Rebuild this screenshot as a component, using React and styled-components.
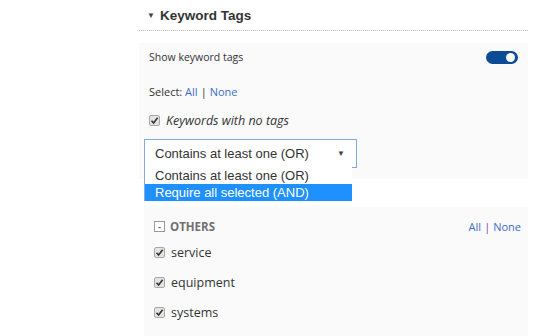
import React from "react";
import styled, { createGlobalStyle } from "styled-components";

const GlobalStyle = createGlobalStyle`
  body {
    margin: 0;
    background: #ffffff;
    font-family: "Open Sans", "Liberation Sans", sans-serif;
    color: #333333;
  }
`;

const Page = styled.div`
  width: 540px;
  height: 336px;
  overflow: hidden;
  padding-left: 139px;
  box-sizing: border-box;
`;

const Column = styled.div`
  width: 389px;
`;

const Header = styled.div`
  height: 30px;
  display: flex;
  align-items: center;
  gap: 6px;
  padding-left: 8px;
  border-bottom: 1px dotted #bdbdbd;
  font-family: "Liberation Sans", Arial, sans-serif;
  font-weight: bold;
  font-size: 13.5px;
  color: #333;
`;

const Caret = styled.span`
  font-size: 8px;
  color: #444;
  width: 7px;
`;

const Panel = styled.div`
  background: #fafafa;
  padding: ${(p) => p.$pad};
  margin-left: ${(p) => p.$indent || 0}px;
  margin-top: ${(p) => p.$top || 0}px;
`;

const Row = styled.div`
  display: flex;
  align-items: center;
  justify-content: ${(p) => (p.$spread ? "space-between" : "flex-start")};
  height: ${(p) => p.$h}px;
  margin-top: ${(p) => p.$mt || 0}px;
  font-size: ${(p) => p.$size || 11}px;
  gap: 6px;
`;

const Toggle = styled.div`
  width: 32px;
  height: 13px;
  border-radius: 7px;
  background: #0b4c94;
  position: relative;
  &::after {
    content: "";
    position: absolute;
    right: 3px;
    top: 2px;
    width: 9px;
    height: 9px;
    border-radius: 50%;
    background: #fff;
  }
`;

const Link = styled.a`
  color: #3a6fc9;
  text-decoration: none;
  cursor: pointer;
`;

const Sep = styled.span`
  color: ${(p) => p.$color || "#333"};
  margin: 0 3px;
`;

const Box = styled.span`
  width: 11px;
  height: 11px;
  box-sizing: border-box;
  border: 1px solid #a8a8a8;
  border-radius: 2px;
  background: #e4e4e4;
  display: inline-flex;
  align-items: center;
  justify-content: center;
  flex: none;
`;

const Check = () => (
  <Box>
    <svg width="9" height="9" viewBox="0 0 9 9">
      <path d="M1.5 4.8 L3.6 7 L7.6 1.8" fill="none" stroke="#333" strokeWidth="1.6" />
    </svg>
  </Box>
);

const Italic = styled.span`
  font-style: italic;
  font-size: 12.5px;
`;

const SelectWrap = styled.div`
  position: relative;
  margin-left: -5px;
  margin-top: 9px;
  width: 213px;
`;

const SelectBox = styled.div`
  height: 29px;
  box-sizing: border-box;
  border: 1px solid #86a9e2;
  background: #fff;
  display: flex;
  align-items: center;
  justify-content: space-between;
  padding: 0 11px 0 10px;
  font-family: "Liberation Sans", Arial, sans-serif;
  font-size: 13px;
  color: #333;
`;

const Arrow = styled.span`
  font-size: 8px;
  color: #444;
`;

const Options = styled.div`
  position: absolute;
  left: 0;
  top: 28px;
  width: 207px;
  background: #fff;
  border-left: 1px solid #86a9e2;
  font-family: "Liberation Sans", Arial, sans-serif;
  font-size: 13px;
  z-index: 2;
`;

const Option = styled.div`
  height: 17px;
  line-height: 17px;
  padding-left: 10px;
  background: ${(p) => (p.$active ? "#1e90ff" : "#fff")};
  color: ${(p) => (p.$active ? "#fff" : "#333")};
`;

const GroupTitle = styled.span`
  display: flex;
  align-items: center;
  gap: 5px;
  font-weight: bold;
  color: #707070;
  font-size: 11.5px;
`;

const Minus = styled.span`
  width: 9px;
  height: 9px;
  border: 1px solid #999;
  display: inline-flex;
  align-items: center;
  justify-content: center;
  font-size: 9px;
  line-height: 1;
  color: #666;
  background: #fff;
`;

const Label = styled.span`
  font-size: 12.5px;
  color: #333;
`;

const items = ["service", "equipment", "systems"];

export default function App() {
  return (
    <Page>
      <GlobalStyle />
      <Column>
        <Header>
          <Caret>▼</Caret>
          Keyword Tags
        </Header>
        <Panel $pad="0 10px 11px 10px">
          <Row $h={28} $mt={12} $size={10.5} $spread>
            <span>Show keyword tags</span>
            <Toggle />
          </Row>
          <Row $h={20} $mt={10}>
            <span>
              Select: <Link>All</Link>
              <Sep>|</Sep>
              <Link>None</Link>
            </span>
          </Row>
          <Row $h={20} $mt={9}>
            <Check />
            <Italic>Keywords with no tags</Italic>
          </Row>
          <SelectWrap>
            <SelectBox>
              <span>Contains at least one (OR)</span>
              <Arrow>▼</Arrow>
            </SelectBox>
            <Options>
              <Option>Contains at least one (OR)</Option>
              <Option $active>Require all selected (AND)</Option>
            </Options>
          </SelectWrap>
        </Panel>
        <Panel $pad="9px 7px 20px 10px" $indent={5} $top={28}>
          <Row $h={20} $spread>
            <GroupTitle>
              <Minus>-</Minus>
              OTHERS
            </GroupTitle>
            <span>
              <Link>All</Link>
              <Sep $color="#8b3a9c">|</Sep>
              <Link>None</Link>
            </span>
          </Row>
          {items.map((it, i) => (
            <Row key={it} $h={30} $mt={i === 0 ? 1 : 0}>
              <Check />
              <Label>{it}</Label>
            </Row>
          ))}
        </Panel>
      </Column>
    </Page>
  );
}
